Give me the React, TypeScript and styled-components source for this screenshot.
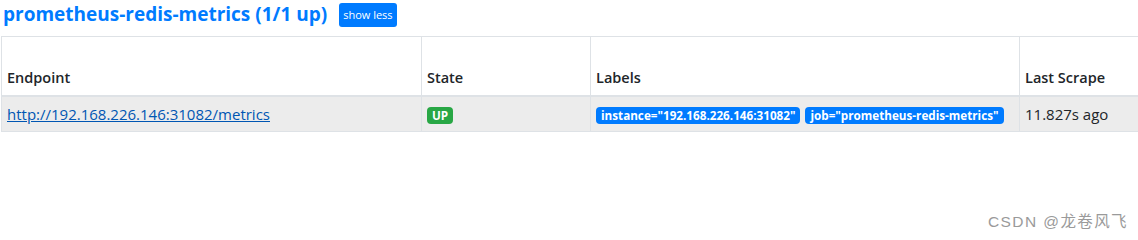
import React from 'react'
import styled, { createGlobalStyle } from 'styled-components'

const GlobalStyle = createGlobalStyle`
  html, body {
    margin: 0;
    padding: 0;
    background: #fff;
    overflow: hidden;
  }
  body {
    font-family: "Open Sans", "Noto Sans", sans-serif;
    color: #212529;
  }
`

const Page = styled.div`
  width: 1138px;
  height: 240px;
  position: relative;
  overflow: hidden;
`

const TitleRow = styled.div`
  display: flex;
  align-items: center;
  gap: 12px;
  height: 30px;
  padding-left: 3px;
  margin-bottom: 6px;
`

const JobName = styled.a`
  font-size: 19px;
  font-weight: 700;
  color: #007bff;
  text-decoration: none;
  margin-top: -3px;
`

const SmallButton = styled.button`
  font-family: inherit;
  font-size: 11px;
  line-height: 18px;
  height: 24px;
  padding: 3px 4px;
  border: none;
  border-radius: 3px;
  background: #007bff;
  color: #fff;
`

const Table = styled.table`
  margin-left: 1px;
  width: 1170px;
  table-layout: fixed;
  border-collapse: collapse;
  border: 1px solid #dee2e6;
  font-size: 15px;
`

const Head = styled.th<{ $w?: number }>`
  width: ${(p) => (p.$w ? `${p.$w}px` : 'auto')};
  height: 48px;
  padding: 5px;
  text-align: left;
  vertical-align: bottom;
  font-weight: 600;
  font-size: 14.5px;
  line-height: 24px;
  border: 1px solid #dee2e6;
  border-bottom: 2px solid #dee2e6;
`

const Row = styled.tr`
  background: #ececec;
`

const Cell = styled.td`
  padding: 5px;
  line-height: 24px;
  border: 1px solid #dee2e6;
  vertical-align: top;
  white-space: nowrap;
`

const EndpointLink = styled.a`
  color: #0056b3;
  text-decoration: underline;
`

const Badge = styled.span<{ $color: string }>`
  display: inline-block;
  margin-right: 5px;
  padding: 0 5px;
  height: 17px;
  line-height: 17px;
  font-size: 11.7px;
  font-weight: 700;
  color: #fff;
  border-radius: 4px;
  background: ${(p) => p.$color};
  vertical-align: middle;
`

const Watermark = styled.div`
  position: absolute;
  right: 10px;
  bottom: 9px;
  font-family: "Liberation Sans", "Noto Sans CJK SC", sans-serif;
  font-size: 15.5px;
  letter-spacing: 1.4px;
  color: #9a9a9a;
`

export default function App() {
  return (
    <Page>
      <GlobalStyle />
      <TitleRow>
        <JobName href="#">prometheus-redis-metrics (1/1 up)</JobName>
        <SmallButton>show less</SmallButton>
      </TitleRow>
      <Table>
        <thead>
          <tr>
            <Head $w={409}>Endpoint</Head>
            <Head $w={158}>State</Head>
            <Head $w={418}>Labels</Head>
            <Head>Last Scrape</Head>
          </tr>
        </thead>
        <tbody>
          <Row>
            <Cell>
              <EndpointLink href="#">http://192.168.226.146:31082/metrics</EndpointLink>
            </Cell>
            <Cell>
              <Badge $color="#28a745">UP</Badge>
            </Cell>
            <Cell>
              <Badge $color="#007bff">instance="192.168.226.146:31082"</Badge>
              <Badge $color="#007bff">job="prometheus-redis-metrics"</Badge>
            </Cell>
            <Cell>11.827s ago</Cell>
          </Row>
        </tbody>
      </Table>
      <Watermark>CSDN @龙卷风飞</Watermark>
    </Page>
  )
}
